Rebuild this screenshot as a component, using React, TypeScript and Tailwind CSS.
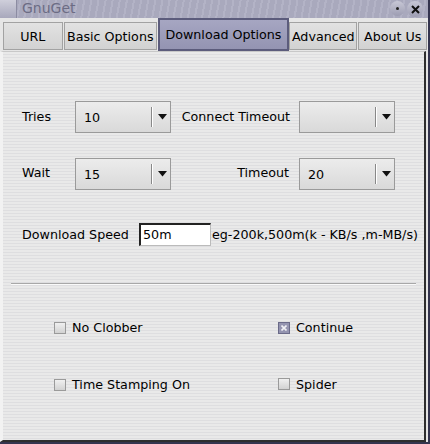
import React from 'react';

const font = "font-['DejaVu_Sans','Liberation_Sans',sans-serif]";

const stripes =
  'bg-[repeating-linear-gradient(180deg,#e9e9e9_0px,#e9e9e9_2px,#dedee0_2px,#dedee0_3px)]';

const tabs = [
  { label: 'URL', w: 'w-[60px]' },
  { label: 'Basic Options', w: 'w-[94px]' },
  { label: 'Download Options', w: 'w-[132px]', active: true },
  { label: 'Advanced', w: 'w-[69px]' },
  { label: 'About Us', w: 'w-[69px]' },
];

const Select: React.FC<{ value?: string }> = ({ value }) => (
  <div className="relative w-[96px] h-[32px] border border-[#9a9a9a] bg-gradient-to-b from-[#ececec] to-[#d9d9d9] flex items-center">
    <span className="pl-[8px] pt-[1px] text-[12.7px] text-black">{value}</span>
    {/* little divider + arrow on the right */}
    <div className="absolute left-[75px] top-[5px] h-[20px] w-[2px] border-l border-[#888] bg-white" />
    <svg className="absolute left-[82px] top-[12px]" width="9" height="6" viewBox="0 0 9 6">
      <path d="M0 0 L9 0 L4.5 5.5 Z" fill="#111" />
    </svg>
  </div>
);

const Check: React.FC<{ label: string; checked?: boolean }> = ({ label, checked }) => (
  <div className="flex items-center gap-[6px]">
    {checked ? (
      <div className="w-[12px] h-[12px] border border-[#6a6a88] bg-[#9494b0] flex items-center justify-center">
        <svg width="6" height="6" viewBox="0 0 6 6">
          <path d="M0.5 0.5 L5.5 5.5 M5.5 0.5 L0.5 5.5" stroke="#f0f0f4" strokeWidth="1.6" />
        </svg>
      </div>
    ) : (
      <div className="w-[12px] h-[12px] border border-[#9a9a9a] bg-gradient-to-b from-[#f0f0f0] to-[#d2d2d2]" />
    )}
    <span className="text-[12.7px] text-black">{label}</span>
  </div>
);

export default function App() {
  return (
    <div className={`w-[430px] h-[444px] bg-[#34344e] overflow-hidden ${font}`}>
      <div className="w-[428px] h-[442px] flex flex-col bg-[#e4e4e4]">
        {/* Title bar */}
        <div className="relative h-[18px] shrink-0 flex items-center bg-[repeating-linear-gradient(100deg,#a9a9bd_0px,#a9a9bd_5px,#b3b3c6_5px,#b3b3c6_7px)]">
          <div className="w-[17px] h-[18px] bg-gradient-to-b from-[#cfcfdb] to-[#a8a8bc] border-r border-[#8c8ca2]" />
          <span className="ml-[5px] -mt-[2px] text-[14px] leading-[16px] text-[#6c6c84]">GnuGet</span>
          <div className="absolute right-[23px] top-[1px] w-[15px] h-[15px] rounded-full bg-gradient-to-b from-[#c8c8d6] to-[#9d9db2] flex items-center justify-center">
            <div className="w-[3px] h-[3px] rounded-full bg-[#222]" />
          </div>
          <div className="absolute right-[5px] top-[1px] w-[16px] h-[16px] rounded-full bg-gradient-to-b from-[#c8c8d6] to-[#9d9db2] flex items-center justify-center">
            <svg width="9" height="9" viewBox="0 0 9 9">
              <path d="M1 1 L8 8 M8 1 L1 8" stroke="#111" strokeWidth="2" />
            </svg>
          </div>
        </div>

        {/* Tabs */}
        <div className="h-[33px] shrink-0 flex items-start pl-[3px] bg-[#e6e6e6]">
          {tabs.map((t) =>
            t.active ? (
              <div
                key={t.label}
                className={`${t.w} h-[33px] border-2 border-[#5c5c7c] bg-gradient-to-b from-[#a6a6c2] to-[#9494b2] flex items-center justify-center text-[12.7px] text-black`}
              >
                {t.label}
              </div>
            ) : (
              <div
                key={t.label}
                className={`${t.w} h-[28px] mt-[4px] mr-[1px] border border-[#a2a2a2] bg-gradient-to-b from-[#e2e2e2] to-[#d2d2d2] flex items-center justify-center pt-[1px] text-[12.7px] text-black`}
              >
                {t.label}
              </div>
            )
          )}
        </div>

        {/* Panel */}
        <div className={`flex-1 mr-[2px] flex flex-col border-l-[3px] border-l-[#f2f2f2] border-r-2 border-r-[#2e2e2e] border-t border-t-[#c8c8c8] border-b-2 border-b-[#2e2e2e] ${stripes}`}>
          {/* Tries / Connect Timeout */}
          <div className="flex pl-[19px] mt-[49px]">
            <span className="w-[53px] text-[12.7px] mt-[6px]">Tries</span>
            <Select value="10" />
            <span className="w-[128px] pr-[9px] text-right text-[12.7px] self-center">Connect Timeout</span>
            <Select />
          </div>

          {/* Wait / Timeout */}
          <div className="flex pl-[19px] mt-[25px]">
            <span className="w-[53px] text-[12.7px] mt-[5px]">Wait</span>
            <Select value="15" />
            <span className="w-[128px] pr-[10px] text-right text-[12.7px] mt-[5px]">Timeout</span>
            <Select value="20" />
          </div>

          {/* Download speed */}
          <div className="flex items-center pl-[19px] mt-[33px] text-[12.7px]">
            <span className="w-[117px]">Download Speed</span>
            <div className="w-[72px] h-[23px] bg-white border-t-2 border-l-2 border-t-[#222] border-l-[#222] border-r border-b border-r-[#bbb] border-b-[#bbb] pl-[2px] flex items-center">
              50m
            </div>
            <span className="ml-[1px]">eg-200k,500m(k - KB/s ,m-MB/s)</span>
          </div>

          {/* Separator */}
          <div className="mx-[8px] mt-[37px] h-[2px] border-t border-t-[#a8a8a8] border-b border-b-[#fafafa]" />

          {/* Check boxes */}
          <div className="grid grid-cols-[224px_1fr] pl-[51px] mt-[33px] gap-y-[37px]">
            <Check label="No Clobber" />
            <Check label="Continue" checked />
            <div className="mt-[1px]">
              <Check label="Time Stamping On" />
            </div>
            <Check label="Spider" />
          </div>
        </div>
      </div>
    </div>
  );
}
